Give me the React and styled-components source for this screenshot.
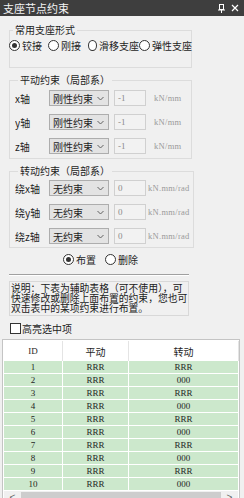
import styled, { createGlobalStyle } from 'styled-components'

const GlobalStyle = createGlobalStyle`
    html, body {
        margin: 0;
        padding: 0;
        background: #f0f0f0;
    }
    body {
        font-family: "Noto Sans CJK SC", "Noto Sans", sans-serif;
        font-size: 10px;
        color: #1e1e1e;
    }
`

const Panel = styled.div`
    width: 244px;
    height: 498px;
    overflow: hidden;
    display: flex;
    flex-direction: column;
    background: #f0f0f0;
`
const TitleBar = styled.div`
    flex: none;
    height: 16px;
    display: flex;
    align-items: center;
    padding: 0 5px 0 3px;
    background: #3e3e3e;
    color: #f4f4f4;
    font-size: 11px;
    line-height: 16px;
`
const TitleText = styled.span`
    flex: 1;
`
const TitleIcons = styled.div`
    display: flex;
    align-items: center;
    gap: 6px;
`

const Group = styled.fieldset`
    flex: none;
    margin: ${p => p.$top}px 0 0 9px;
    width: ${p => p.$width}px;
    box-sizing: border-box;
    padding: ${p => p.$pad};
    border: 1px solid #dcdcdc;
    min-width: 0;
`
const Legend = styled.legend`
    margin-left: 3px;
    padding: 0 2px;
    font-size: 10px;
    line-height: 12px;
    color: #1e1e1e;
`

const RadioRow = styled.div`
    display: flex;
    align-items: center;
    height: 12px;
    margin-left: ${p => p.$indent || 0}px;
`
const RadioItem = styled.label`
    display: flex;
    align-items: center;
    gap: 2px;
    width: ${p => (p.$width ? `${p.$width}px` : 'auto')};
    flex: none;
    white-space: nowrap;
`
const RadioDot = styled.span`
    width: 11px;
    height: 11px;
    box-sizing: border-box;
    border: 1px solid #333;
    border-radius: 50%;
    background: #fff;
    display: flex;
    align-items: center;
    justify-content: center;
    &::after {
        content: '';
        width: 5px;
        height: 5px;
        border-radius: 50%;
        background: ${p => (p.$checked ? '#333' : 'transparent')};
    }
`

const Rows = styled.div`
    display: flex;
    flex-direction: column;
    gap: 8px;
`
const FieldRow = styled.div`
    display: flex;
    align-items: center;
    height: 16px;
    white-space: nowrap;
    overflow: hidden;
`
const FieldLabel = styled.span`
    width: 34px;
    flex: none;
`
const Select = styled.div`
    width: 60px;
    height: 16px;
    flex: none;
    box-sizing: border-box;
    border: 1px solid #adadad;
    background: #e3e3e3;
    display: flex;
    align-items: center;
    justify-content: space-between;
    padding: 0 4px 0 3px;
    font-size: 10px;
`
const ValueBox = styled.div`
    width: 32px;
    height: 16px;
    flex: none;
    margin-left: 5px;
    box-sizing: border-box;
    border: 1px solid #d0d0d0;
    background: #f2f2f2;
    color: #8a8a8a;
    font-family: "Liberation Serif", serif;
    font-size: 9px;
    line-height: 14px;
    padding-left: 3px;
`
const Unit = styled.span`
    flex: 1;
    min-width: 0;
    margin-left: ${p => p.$gap}px;
    color: #9a9a9a;
    font-family: "Liberation Serif", serif;
    font-size: 8.5px;
    letter-spacing: 0.3px;
    overflow: hidden;
`

const ActionRow = styled.div`
    flex: none;
    margin: 5px 0 0 9px;
    width: 183px;
    display: flex;
    justify-content: center;
    height: 12px;
`
const Separator = styled.div`
    flex: none;
    margin: 9px 0 0 9px;
    width: 180px;
    height: 0;
    border-top: 1px solid #a0a0a0;
    border-bottom: 1px solid #ffffff;
`
const Note = styled.div`
    flex: none;
    margin: 5px 0 0 9px;
    width: 180px;
    height: 35px;
    box-sizing: border-box;
    border: 1px solid #d8d8d8;
    padding: 1px 0 0 1px;
    font-size: 9.8px;
    line-height: 10px;
    white-space: nowrap;
    overflow: hidden;
    color: #202020;
`
const CheckRow = styled.label`
    flex: none;
    margin: 6px 0 0 10px;
    display: flex;
    align-items: center;
    gap: 1px;
    height: 12px;
`
const CheckBox = styled.span`
    width: 11px;
    height: 11px;
    box-sizing: border-box;
    border: 1px solid #333;
    background: #fff;
`

const TableFrame = styled.div`
    margin: 5px 4px 0 2px;
    flex: 1;
    display: flex;
    flex-direction: column;
    border: 1px solid #c4c4c4;
    border-bottom: none;
    background: #fff;
    padding: 1px 1px 0 1px;
    min-height: 0;
`
const Grid = styled.div`
    display: grid;
    grid-template-columns: 58px 65px 1fr;
    column-gap: 1px;
`
const HeadCell = styled.div`
    height: 20px;
    display: flex;
    align-items: center;
    justify-content: center;
    background: #fff;
    box-shadow: 1px 0 0 #e4e4e4;
    font-family: ${p => (p.$latin ? '"Liberation Serif", serif' : '"Noto Sans CJK SC", sans-serif')};
    font-size: ${p => (p.$latin ? 9 : 10)}px;
`
const Cell = styled.div`
    height: 12px;
    margin-bottom: 1px;
    display: flex;
    align-items: center;
    justify-content: center;
    background: #cce8cc;
    font-family: "Liberation Serif", serif;
    font-size: 9px;
    color: #1e1e1e;
`
const ScrollBar = styled.div`
    flex: none;
    height: 17px;
    display: flex;
    align-items: flex-start;
    background: #f0f0f0;
    padding-top: 1px;
`
const ScrollArrow = styled.span`
    width: 17px;
    height: 10px;
    display: flex;
    align-items: center;
    justify-content: center;
    color: #606060;
    font-family: "Liberation Sans", sans-serif;
    font-size: 10px;
`
const ScrollThumb = styled.div`
    flex: 1;
    height: 15px;
    background: #cdcdcd;
`

const Chevron = () => (
    <svg width="7" height="5" viewBox="0 0 7 5">
        <polyline points="0.5,1 3.5,4 6.5,1" fill="none" stroke="#606060" strokeWidth="1" />
    </svg>
)

const Pin = () => (
    <svg width="7" height="9" viewBox="0 0 7 9">
        <rect x="1.5" y="0.5" width="4" height="5" fill="none" stroke="#fff" strokeWidth="1" />
        <line x1="0" y1="6" x2="7" y2="6" stroke="#fff" strokeWidth="1" />
        <line x1="3.5" y1="6" x2="3.5" y2="9" stroke="#fff" strokeWidth="1" />
    </svg>
)

const Close = () => (
    <svg width="8" height="8" viewBox="0 0 8 8">
        <path d="M1 1 L7 7 M7 1 L1 7" stroke="#fff" strokeWidth="1.2" />
    </svg>
)

const Radio = ({ checked, width, children }) => (
    <RadioItem $width={width}>
        <RadioDot $checked={checked} />
        {children}
    </RadioItem>
)

const moveRows = [
    { label: 'x轴', value: '刚性约束', num: '-1' },
    { label: 'y轴', value: '刚性约束', num: '-1' },
    { label: 'z轴', value: '刚性约束', num: '-1' },
]
const turnRows = [
    { label: '绕x轴', value: '无约束', num: '0' },
    { label: '绕y轴', value: '无约束', num: '0' },
    { label: '绕z轴', value: '无约束', num: '0' },
]
const tableRows = Array.from({ length: 10 }, (_, i) => ({
    id: i + 1,
    move: 'RRR',
    turn: i % 2 === 0 ? 'RRR' : '000',
}))

const App = () => {
    return (
        <Panel>
            <GlobalStyle />
            <TitleBar>
                <TitleText>支座节点约束</TitleText>
                <TitleIcons>
                    <Pin />
                    <Close />
                </TitleIcons>
            </TitleBar>

            <Group $top={8} $width={183} $pad="3px 0 16px 0">
                <Legend>常用支座形式</Legend>
                <RadioRow $indent={-1}>
                    <Radio checked width={39}>铰接</Radio>
                    <Radio width={40}>刚接</Radio>
                    <Radio width={51}>滑移支座</Radio>
                    <Radio>弹性支座</Radio>
                </RadioRow>
            </Group>

            <Group $top={6} $width={183} $pad="4px 0 4px 5px">
                <Legend>平动约束（局部系）</Legend>
                <Rows>
                    {moveRows.map(r => (
                        <FieldRow key={r.label}>
                            <FieldLabel>{r.label}</FieldLabel>
                            <Select>{r.value}<Chevron /></Select>
                            <ValueBox>{r.num}</ValueBox>
                            <Unit $gap={8}>kN/mm</Unit>
                        </FieldRow>
                    ))}
                </Rows>
            </Group>

            <Group $top={6} $width={185} $pad="3px 0 3px 5px">
                <Legend>转动约束（局部系）</Legend>
                <Rows>
                    {turnRows.map(r => (
                        <FieldRow key={r.label}>
                            <FieldLabel>{r.label}</FieldLabel>
                            <Select>{r.value}<Chevron /></Select>
                            <ValueBox>{r.num}</ValueBox>
                            <Unit $gap={2}>kN.mm/rad</Unit>
                        </FieldRow>
                    ))}
                </Rows>
            </Group>

            <ActionRow>
                <Radio checked width={42}>布置</Radio>
                <Radio>删除</Radio>
            </ActionRow>

            <Separator />

            <Note>
                说明：下表为辅助表格（可不使用），可<br />
                快速修改或删除上面布置的约束，您也可<br />
                双击表中的某项约束进行布置。
            </Note>

            <CheckRow>
                <CheckBox />
                高亮选中项
            </CheckRow>

            <TableFrame>
                <Grid>
                    <HeadCell $latin>ID</HeadCell>
                    <HeadCell>平动</HeadCell>
                    <HeadCell>转动</HeadCell>
                    {tableRows.map(r => [
                        <Cell key={`i${r.id}`}>{r.id}</Cell>,
                        <Cell key={`m${r.id}`}>{r.move}</Cell>,
                        <Cell key={`t${r.id}`}>{r.turn}</Cell>,
                    ])}
                </Grid>
                <ScrollBar>
                    <ScrollArrow>&lt;</ScrollArrow>
                    <ScrollThumb />
                    <ScrollArrow>&gt;</ScrollArrow>
                </ScrollBar>
            </TableFrame>
        </Panel>
    )
}

export default App
